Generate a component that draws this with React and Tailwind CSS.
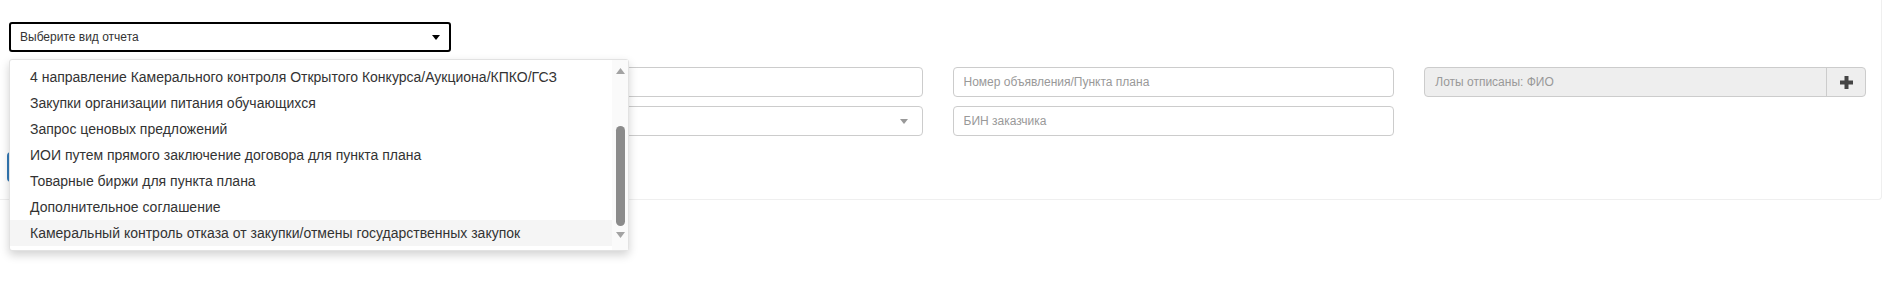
import { useState } from 'react';

const reportTypes = [
  '4 направление Камерального контроля Открытого Конкурса/Аукциона/КПКО/ГСЗ',
  'Закупки организации питания обучающихся',
  'Запрос ценовых предложений',
  'ИОИ путем прямого заключение договора для пункта плана',
  'Товарные биржи для пункта плана',
  'Дополнительное соглашение',
  'Камеральный контроль отказа от закупки/отмены государственных закупок',
];

function Caret({ className }) {
  return (
    <svg width="8" height="5" viewBox="0 0 8 5" className={className}>
      <path d="M0 0h8L4 5z" fill="currentColor" />
    </svg>
  );
}

export default function App() {
  const [hovered, setHovered] = useState(6);

  return (
    <div className="min-h-[291px] bg-white font-['Liberation_Sans',Arial,sans-serif] text-[#333]">
      {/* Filter card */}
      <div className="relative mr-[6px] rounded-br-[4px] border-r border-b border-[#efefef] pt-[22px] pb-[17px] pl-[9px] pr-[15px]">
        <div className="grid grid-cols-4 gap-x-[30px]">
          <div className="relative">
            <div className="flex h-[30px] items-center justify-between rounded-[3px] border-2 border-black px-[9px] text-[12px]">
              <span>Выберите вид отчета</span>
              <Caret className="text-black" />
            </div>

            {/* Open dropdown */}
            <div className="absolute left-0 top-[37px] z-10 flex w-[620px] rounded-[3px] border border-[#e2e2e2] bg-white shadow-[0_4px_10px_rgba(0,0,0,0.18)]">
              <ul className="flex-1 pt-[4px] pb-[4px]">
                {reportTypes.map((item, i) => (
                  <li
                    key={item}
                    onMouseEnter={() => setHovered(i)}
                    className={`flex h-[26px] items-center pl-[20px] text-[14px] ${hovered === i ? 'bg-[#f5f5f5]' : ''}`}
                  >
                    {item}
                  </li>
                ))}
              </ul>
              <div className="flex w-[16px] flex-col items-center bg-[#fafafa] pt-[8px]">
                <svg width="9" height="6" viewBox="0 0 9 6" className="text-[#a3a3a3]">
                  <path d="M0 6h9L4.5 0z" fill="currentColor" />
                </svg>
                <div className="mt-[52px] h-[100px] w-[9px] rounded-full bg-[#8b8b8b]" />
                <svg width="9" height="6" viewBox="0 0 9 6" className="mt-[6px] text-[#a3a3a3]">
                  <path d="M0 0h9L4.5 6z" fill="currentColor" />
                </svg>
              </div>
            </div>
          </div>
        </div>

        <div className="mt-[15px] grid grid-cols-4 gap-x-[30px] gap-y-[9px] text-[12px]">
          <input className="h-[30px] rounded-[4px] border border-[#ccc] px-[10px]" placeholder="Дата" />
          <input className="h-[30px] rounded-[4px] border border-[#ccc] px-[10px]" />
          <input
            className="h-[30px] rounded-[4px] border border-[#ccc] px-[10px] placeholder:text-[#999]"
            placeholder="Номер объявления/Пункта плана"
          />
          <div className="flex h-[30px] rounded-[4px] border border-[#ccc] bg-[#eee]">
            <span className="flex flex-1 items-center px-[10px] text-[#999]">Лоты отписаны: ФИО</span>
            <button className="flex w-[39px] items-center justify-center border-l border-[#ccc]">
              <svg width="13" height="13" viewBox="0 0 13 13">
                <path d="M4.5 0h4v4.5H13v4H8.5V13h-4V8.5H0v-4h4.5z" fill="#444" />
              </svg>
            </button>
          </div>

          <input className="h-[30px] rounded-[4px] border border-[#ccc] px-[10px]" placeholder="Статус" />
          <div className="flex h-[30px] items-center justify-end rounded-[4px] border border-[#ccc] pr-[14px]">
            <Caret className="text-[#999]" />
          </div>
          <input
            className="h-[30px] rounded-[4px] border border-[#ccc] px-[10px] placeholder:text-[#999]"
            placeholder="БИН заказчика"
          />
        </div>

        <div className="mt-[16px] flex">
          <button className="-ml-[2px] h-[30px] rounded-[4px] bg-[#337ab7] px-[14px] text-[13px] text-white">
            Сформировать
          </button>
        </div>
      </div>
    </div>
  );
}
